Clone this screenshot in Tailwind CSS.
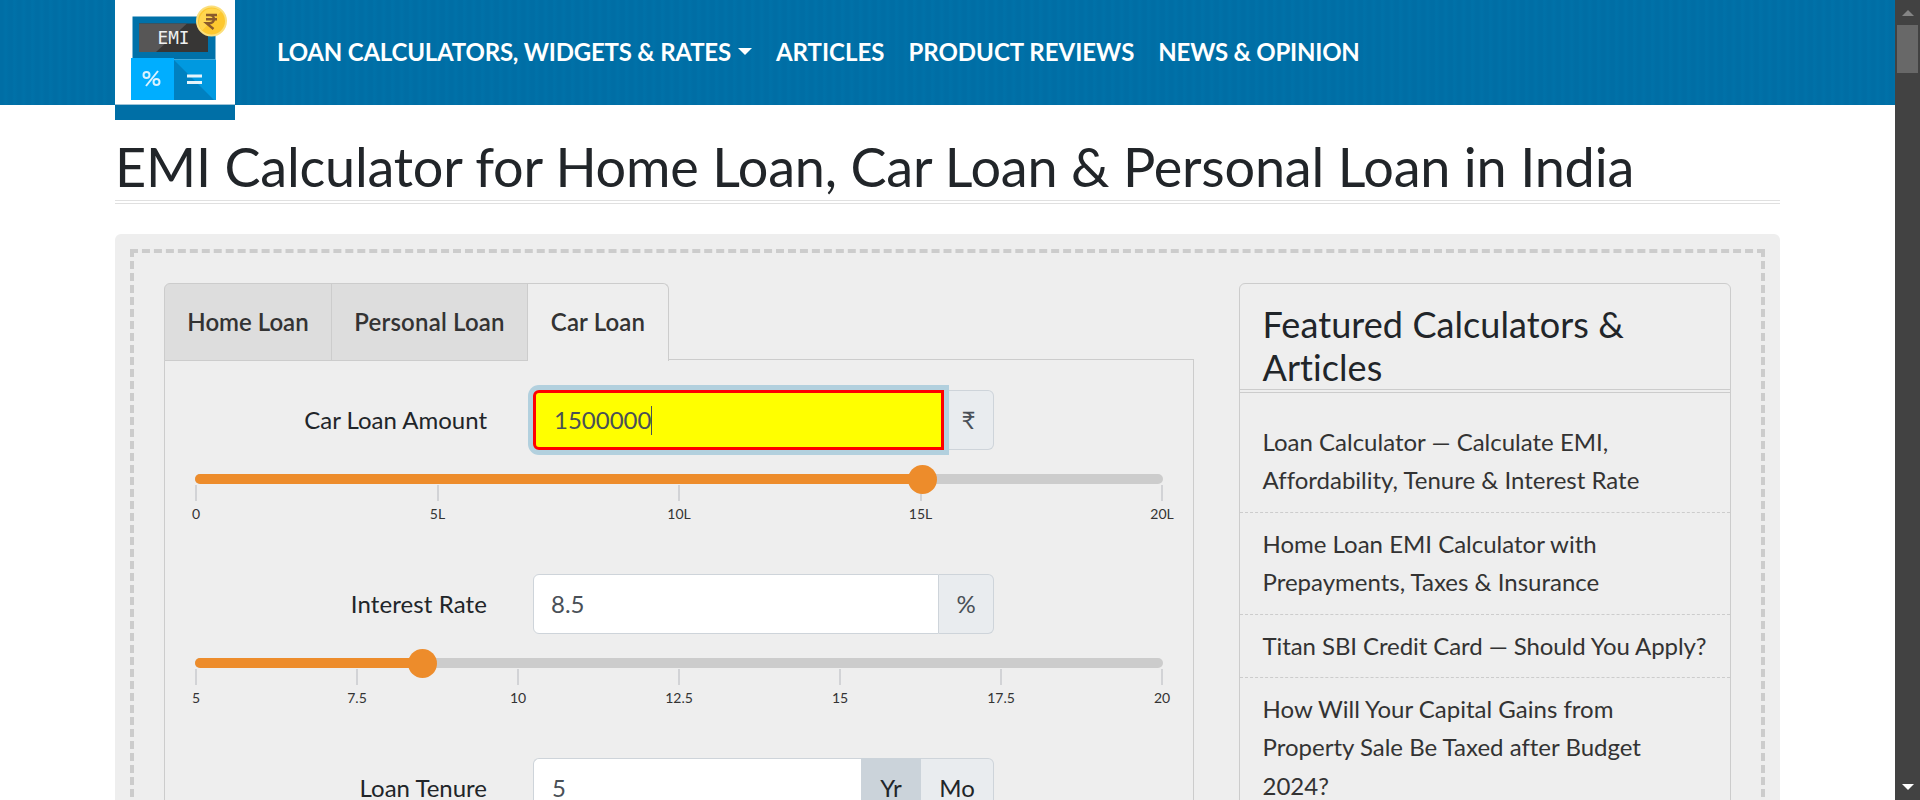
<!DOCTYPE html>
<html lang="en">
<head>
<meta charset="utf-8">
<title>EMI Calculator</title>
<script src="https://cdn.jsdelivr.net/npm/@tailwindcss/browser@4"></script>
</head>
<body class="h-[800px] overflow-hidden bg-white font-['Lato',sans-serif] text-2xl text-[#212529] [font-variant-ligatures:none]">
<div class="flex h-[800px] w-[1920px] overflow-hidden">
  <div class="h-[800px] w-[1895px] overflow-hidden">
    <header class="h-[105px] bg-[#006fa6] bg-[repeating-linear-gradient(90deg,#006ea5_0px,#006ea5_3px,#0071a8_5px,#0071a8_6px,#006ea5_9px)] px-[115px]">
      <div class="flex items-start">
        <a class="block h-[120px] w-[120px] shrink-0 bg-[#006fa6]">
          <svg class="block" width="120" height="105" viewBox="0 0 120 105">
            <rect width="120" height="105" fill="#fff"/>
            <rect y="104" width="120" height="1" fill="#9fc4d8"/>
            <rect x="17.500" y="16.500" width="83" height="43" fill="#0071a9"/>
            <rect x="24" y="23.500" width="69" height="28.500" fill="#373635"/>
            <path d="M24 23.500H72L41 52H24Z" fill="#575656"/>
            <rect x="16" y="58" width="43" height="42" fill="#00aeff"/>
            <rect x="59" y="59.500" width="42" height="40.500" fill="#0099e0"/>
            <path d="M59 60L99 100H59Z" fill="#0080c0"/>
            <text x="58.500" y="44" text-anchor="middle" font-family="'DejaVu Sans Mono'" font-size="18.500" textLength="32" lengthAdjust="spacingAndGlyphs" fill="#f0f0f0">EMI</text>
            <g fill="none" stroke="#d8f2ff" stroke-width="2"><circle cx="31.500" cy="75" r="3"/><circle cx="41.500" cy="82" r="3"/><path d="M43 71L31 86"/></g>
            <path d="M72 76H87M72 82.500H87" stroke="#e6f4fb" stroke-width="3"/>
            <circle cx="96.500" cy="21" r="15.500" fill="#fbdf7c"/>
            <circle cx="96.500" cy="21" r="13.500" fill="#fdc82f"/>
            <path d="M87 30.500A13.500 13.500 0 0 1 106 11.500Z" fill="#ffd64f"/>
            <path d="M91 15H102M91 19.200H102M91 15H94.500C100.500 15 100.500 23.200 94.500 23.200H91.500L98.500 29" fill="none" stroke="#8a5a2b" stroke-width="2.400"/>
          </svg>
        </a>
        <nav class="ml-[42px] flex h-[103px] items-center text-2xl leading-[36px] font-bold whitespace-nowrap text-white">
          <a class="flex items-center tracking-[-0.200px]">LOAN CALCULATORS, WIDGETS &amp; RATES<span class="ml-[7px] border-x-[7px] border-t-[7px] border-x-transparent border-t-white"></span></a>
          <a class="ml-6">ARTICLES</a>
          <a class="ml-6">PRODUCT REVIEWS</a>
          <a class="ml-6 tracking-[-0.220px]">NEWS &amp; OPINION</a>
        </nav>
      </div>
    </header>
    <main class="mx-[115px]">
      <h1 class="mt-[29px] h-[70px] border-b-4 border-double border-[#e0e0e0] text-[54px] leading-[65px] tracking-[-0.200px] whitespace-nowrap">EMI Calculator for Home Loan, Car Loan &amp; Personal Loan in India</h1>
      <section class="mt-[30px] rounded-md bg-[#eee] p-[15px]">
        <div class="flex h-[800px] items-start border-4 border-dashed border-[#ccc] p-[30px]">
          <div class="w-[1030px] shrink-0">
            <div class="flex text-[#333] font-semibold">
              <div class="flex h-[78px] w-[168px] items-center justify-center rounded-tl-md border border-[#ccc] bg-[#ddd]">Home Loan</div>
              <div class="-ml-px flex h-[78px] w-[197px] items-center justify-center border border-[#ccc] bg-[#ddd] tracking-[0.200px]">Personal Loan</div>
              <div class="relative z-10 -ml-px flex h-[78px] w-[142px] items-center justify-center rounded-tr-md border border-b-0 border-[#ccc] bg-[#eee] pb-px tracking-[0.150px]">Car Loan</div>
            </div>
            <div class="-mt-[2px] h-[700px] border border-[#ccc] px-[30px] pt-[30px]">
              <div class="h-[184px]">
                <div class="flex h-[60px] items-center">
                  <label class="w-[292px] text-right">Car Loan Amount</label>
                  <div class="ml-[46px] flex h-[60px] w-[461px] text-[#495057]">
                    <div class="relative z-10 flex w-[411px] items-center rounded-l-md border-[3px] border-[#f00] bg-[#ff0] pl-[18px] shadow-[0_0_0_5px_#b2d0de]">1500000<span class="h-[29px] w-px bg-[#495057]"></span></div>
                    <div class="flex flex-1 items-center justify-center rounded-r-md border border-l-0 border-[#ced4da] bg-[#e9ecef]">₹</div>
                  </div>
                </div>
                <div class="relative mt-6 h-[10px] w-[968px] rounded-full bg-[#ccc]">
                  <div class="h-[10px] w-[727px] rounded-l-full bg-[#ed8c2b]"></div>
                  <span class="absolute top-[-9px] left-[713px] z-10 h-[29px] w-[29px] rounded-full bg-[#ed8c2b]"></span>
                </div>
                <div class="mt-px flex w-[967px] justify-between pl-px text-[14px] leading-[17px] text-[#333]">
                  <div class="flex w-0 flex-col items-center"><span class="h-4 w-[2px] bg-[#d2d3d6]"></span><span class="mt-1">0</span></div>
                  <div class="flex w-0 flex-col items-center"><span class="h-4 w-[2px] bg-[#d2d3d6]"></span><span class="mt-1">5L</span></div>
                  <div class="flex w-0 flex-col items-center"><span class="h-4 w-[2px] bg-[#d2d3d6]"></span><span class="mt-1">10L</span></div>
                  <div class="flex w-0 flex-col items-center"><span class="h-4 w-[2px] bg-[#d2d3d6]"></span><span class="mt-1">15L</span></div>
                  <div class="flex w-0 flex-col items-center"><span class="h-4 w-[2px] bg-[#d2d3d6]"></span><span class="mt-1">20L</span></div>
                </div>
              </div>
              <div class="h-[184px]">
                <div class="flex h-[60px] items-center">
                  <label class="w-[292px] text-right tracking-[0.100px]">Interest Rate</label>
                  <div class="ml-[46px] flex h-[60px] w-[461px] text-[#495057]">
                    <div class="flex w-[406px] items-center rounded-l-md border border-[#ced4da] bg-white pl-[17px]">8.5</div>
                    <div class="flex flex-1 items-center justify-center rounded-r-md border border-l-0 border-[#ced4da] bg-[#e9ecef]">%</div>
                  </div>
                </div>
                <div class="relative mt-6 h-[10px] w-[968px] rounded-full bg-[#ccc]">
                  <div class="h-[10px] w-[227px] rounded-l-full bg-[#ed8c2b]"></div>
                  <span class="absolute top-[-9px] left-[213px] z-10 h-[29px] w-[29px] rounded-full bg-[#ed8c2b]"></span>
                </div>
                <div class="mt-px flex w-[967px] justify-between pl-px text-[14px] leading-[17px] text-[#333]">
                  <div class="flex w-0 flex-col items-center"><span class="h-4 w-[2px] bg-[#d2d3d6]"></span><span class="mt-1">5</span></div>
                  <div class="flex w-0 flex-col items-center"><span class="h-4 w-[2px] bg-[#d2d3d6]"></span><span class="mt-1">7.5</span></div>
                  <div class="flex w-0 flex-col items-center"><span class="h-4 w-[2px] bg-[#d2d3d6]"></span><span class="mt-1">10</span></div>
                  <div class="flex w-0 flex-col items-center"><span class="h-4 w-[2px] bg-[#d2d3d6]"></span><span class="mt-1">12.5</span></div>
                  <div class="flex w-0 flex-col items-center"><span class="h-4 w-[2px] bg-[#d2d3d6]"></span><span class="mt-1">15</span></div>
                  <div class="flex w-0 flex-col items-center"><span class="h-4 w-[2px] bg-[#d2d3d6]"></span><span class="mt-1">17.5</span></div>
                  <div class="flex w-0 flex-col items-center"><span class="h-4 w-[2px] bg-[#d2d3d6]"></span><span class="mt-1">20</span></div>
                </div>
              </div>
              <div class="flex h-[60px] items-center">
                <label class="w-[292px] text-right">Loan Tenure</label>
                <div class="ml-[46px] flex h-[60px] w-[461px]">
                  <div class="flex w-[328px] items-center rounded-l-md border border-r-0 border-[#ced4da] bg-white pl-[18px] text-[#495057]">5</div>
                  <div class="flex w-[60px] items-center justify-center bg-[#cbd3da]">Yr</div>
                  <div class="flex flex-1 items-center justify-center rounded-r-md border border-l-0 border-[#ced4da] bg-[#e9ecef]">Mo</div>
                </div>
              </div>
            </div>
          </div>
          <aside class="ml-[45px] h-[720px] w-[492px] shrink-0 rounded-t-md border border-[#ccc] pt-[19px]">
            <h2 class="h-[90px] border-b-4 border-double border-[#ccc] px-[22.500px] text-4xl leading-[43px] tracking-[0.080px]">Featured Calculators &amp;<br>Articles</h2>
            <ul class="mt-[18px] leading-[38.400px] whitespace-nowrap text-[#333]">
              <li class="border-b border-dashed border-[#ccc] px-[22.500px] py-3">Loan Calculator — Calculate EMI,<br>Affordability, Tenure &amp; Interest Rate</li>
              <li class="border-b border-dashed border-[#ccc] px-[22.500px] py-3">Home Loan EMI Calculator with<br>Prepayments, Taxes &amp; Insurance</li>
              <li class="border-b border-dashed border-[#ccc] px-[22.500px] py-3 tracking-[-0.080px]">Titan SBI Credit Card — Should You Apply?</li>
              <li class="px-[22.500px] py-3">How Will Your Capital Gains from<br>Property Sale Be Taxed after Budget<br>2024?</li>
            </ul>
          </aside>
        </div>
      </section>
    </main>
  </div>
  <div class="flex h-[800px] w-[25px] flex-col items-center bg-[#424242]">
    <svg class="mt-[10px]" width="12" height="6" viewBox="0 0 12 6"><path d="M6 0L12 6H0Z" fill="#858585"/></svg>
    <div class="mt-[9px] h-12 w-[21px] bg-[#686868]"></div>
    <svg class="mt-auto mb-[10px]" width="12" height="6" viewBox="0 0 12 6"><path d="M0 0H12L6 6Z" fill="#fff"/></svg>
  </div>
</div>
</body>
</html>
